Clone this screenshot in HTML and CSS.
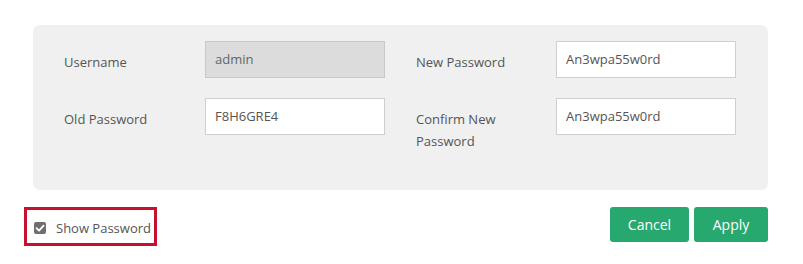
FILE: index.html
```html
<!DOCTYPE html>
<html lang="en">
<head>
    <meta charset="UTF-8">
    <title>Change Password</title>
    <link rel="stylesheet" href="styles.css">
</head>
<body>
    <div class="page">
        <div class="panel">
            <div class="field">
                <label class="field-label">Username</label>
                <input class="field-input" type="text" value="admin" disabled>
            </div>
            <div class="field">
                <label class="field-label">New Password</label>
                <input class="field-input" type="text" value="An3wpa55w0rd">
            </div>
            <div class="field">
                <label class="field-label">Old Password</label>
                <input class="field-input" type="text" value="F8H6GRE4">
            </div>
            <div class="field">
                <label class="field-label">Confirm New Password</label>
                <input class="field-input" type="text" value="An3wpa55w0rd">
            </div>
        </div>

        <div class="footer">
            <label class="show-password">
                <span class="check-box">
                    <svg width="10" height="10" viewBox="0 0 10 10">
                        <path d="M1.5 5.2 L4 7.6 L8.6 2.6" fill="none" stroke="#fff" stroke-width="1.8" stroke-linecap="round" stroke-linejoin="round"/>
                    </svg>
                </span>
                Show Password
            </label>
            <div class="actions">
                <button class="btn btn-cancel">Cancel</button>
                <button class="btn btn-apply">Apply</button>
            </div>
        </div>
    </div>
</body>
</html>
```

FILE: styles.css
```css
:root {
    --panel-bg: #f0f0f0;
    --text-color: #555;
    --input-border: #cfcfcf;
    --green: #27a86e;
    --red: #c8102e;
}

* {
    box-sizing: border-box;
    margin: 0;
    padding: 0;
}

body {
    font-family: 'Open Sans', 'Noto Sans', sans-serif;
    font-size: 13px;
    color: var(--text-color);
    background: #fff;
}

.page {
    padding: 25px 35px 0 24px;
}

.panel {
    margin-left: 9px;
    height: 165px;
    background: var(--panel-bg);
    border-radius: 7px;
    padding: 16px 0 0 31px;
    display: grid;
    grid-template-columns: 352px 352px;
    row-gap: 20px;
    align-content: start;
}

.field {
    display: flex;
    align-items: flex-start;
}

.field-label {
    width: 141px;
    padding: 10px 20px 0 0;
    line-height: 22px;
}

.field:nth-child(even) .field-label {
    width: 140px;
}

.field-input {
    width: 180px;
    height: 37px;
    border: 1px solid var(--input-border);
    background: #fff;
    padding: 0 9px 1px;
    font-family: inherit;
    font-size: 13px;
    color: var(--text-color);
    outline: none;
}

.field-input:disabled {
    background: #dcdcdc;
    border-color: #c8c8c8;
    color: #666;
}

.footer {
    margin-top: 17px;
    display: flex;
    justify-content: space-between;
    align-items: flex-start;
}

.show-password {
    display: flex;
    align-items: center;
    width: 133px;
    height: 39px;
    border: 3px solid var(--red);
    padding-left: 7px;
    padding-top: 3px;
    cursor: pointer;
}

.check-box {
    width: 12px;
    height: 12px;
    border-radius: 2px;
    background: #6f6f6f;
    display: flex;
    align-items: center;
    justify-content: center;
    margin-right: 10px;
}

.actions {
    display: flex;
    gap: 5px;
}

.btn {
    height: 35px;
    border: none;
    border-radius: 3px;
    background: var(--green);
    color: #fff;
    font-family: inherit;
    font-size: 14px;
    cursor: pointer;
}

.btn-cancel {
    width: 79px;
}

.btn-apply {
    width: 74px;
}
```
